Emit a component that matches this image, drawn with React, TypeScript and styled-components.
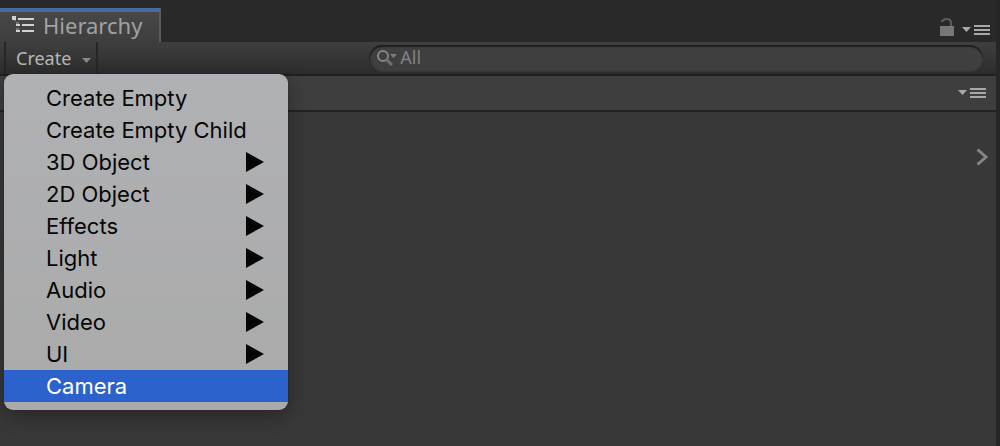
import React from "react";
import styled, { createGlobalStyle } from "styled-components";

const GlobalStyle = createGlobalStyle`
  *, *::before, *::after { box-sizing: border-box; }
  body {
    margin: 0;
    background: #262626;
    font-family: "Noto Sans", "Open Sans", sans-serif;
    color: #b4b4b4;
  }
  button { border: 0; padding: 0; background: none; color: inherit; font: inherit; }
`;

const Window = styled.main`
  display: flex;
  flex-direction: column;
  min-height: 100vh;
  padding-right: 4px;
  background: #262626;
`;

const TabBar = styled.header`
  display: flex;
  align-items: stretch;
  justify-content: space-between;
  height: 42px;
  padding-top: 8px;
  background: #292929;
`;

const Tab = styled.button`
  display: flex;
  align-items: center;
  gap: 8px;
  padding: 0 17px 4px 12px;
  border-top: 4px solid #466ca4;
  border-right: 2px solid #5c5c5c;
  background: linear-gradient(#484848, #3e3e3e);
  color: #a2a2a2;
  font-size: 22px;
  line-height: 26px;
`;

const Actions = styled.div`
  display: flex;
  align-items: flex-end;
  gap: 8px;
  padding: 0 6px 6px 0;
`;

const IconButton = styled.button`
  display: flex;
  color: #a8a8a8;
`;

const Toolbar = styled.div`
  position: relative;
  display: flex;
  align-items: center;
  height: 34px;
  padding: 0 13px 0 4px;
  background: linear-gradient(#3f3f3f, #2c2c2c);
  border-bottom: 2px solid #202020;
`;

const CreateButton = styled.button`
  display: flex;
  align-items: center;
  gap: 11px;
  height: 32px;
  padding: 0 5px 0 10px;
  border: solid #262626;
  border-width: 0 2px;
  color: #b8b8b8;
  font-size: 18px;
  line-height: 32px;
`;

const Search = styled.label`
  display: flex;
  flex: 1;
  align-items: center;
  gap: 2px;
  height: 27px;
  margin-left: 271px;
  padding-left: 8px;
  border-radius: 14px;
  background: #3f3f3f;
  box-shadow: inset 0 2px 1px #1e1e1e, inset 1px 0 2px #262626;
  color: #828282;
`;

const SearchInput = styled.input`
  flex: 1;
  min-width: 0;
  height: 27px;
  padding: 0 0 3px;
  border: 0;
  outline: 0;
  background: none;
  color: inherit;
  font: 18px/24px "Noto Sans", sans-serif;
  &::placeholder { color: #828282; opacity: 1; }
`;

const SceneRow = styled.div`
  display: flex;
  align-items: center;
  justify-content: flex-end;
  height: 36px;
  padding-right: 10px;
  background: #3e3e3e;
  border-bottom: 2px solid #232323;
`;

const Content = styled.section`
  display: flex;
  flex: 1;
  align-items: flex-start;
  justify-content: flex-end;
  padding: 36px 8px 0 0;
  background: #383838;
`;

const Menu = styled.ul`
  position: absolute;
  top: 32px;
  left: 4px;
  z-index: 1;
  width: 284px;
  margin: 0;
  padding: 8px 0;
  overflow: hidden;
  list-style: none;
  border-radius: 9px;
  background: linear-gradient(#b0b1b4, #aaaaaa);
  box-shadow: 0 6px 20px rgba(0, 0, 0, 0.3), 0 0 1px #1c1c1c;
`;

const MenuItem = styled.button<{ $active?: boolean }>`
  display: flex;
  align-items: center;
  justify-content: space-between;
  width: 100%;
  height: 32px;
  padding: 0 24px 0 42px;
  background: ${(p) => (p.$active ? "#2c62cb" : "transparent")};
  color: ${(p) => (p.$active ? "#ffffff" : "#060606")};
  font: 22px/32px Inter, "Liberation Sans", sans-serif;
  text-align: left;
`;

const items = [
  { label: "Create Empty" },
  { label: "Create Empty Child" },
  { label: "3D Object", submenu: true },
  { label: "2D Object", submenu: true },
  { label: "Effects", submenu: true },
  { label: "Light", submenu: true },
  { label: "Audio", submenu: true },
  { label: "Video", submenu: true },
  { label: "UI", submenu: true },
  { label: "Camera", active: true },
];

const HierarchyIcon = () => (
  <svg width="23" height="18" viewBox="0 0 23 18" fill="#d2d2d2" aria-hidden="true">
    <path d="M0 0h4v4H0zM6 2h16v2H6zM4 8h4v2H4zM10 8h12v2H10zM4 14h4v2H4zM10 14h12v2H10z" />
    <path d="M4 6h3v2H4zM4 12h3v2H4zM2 4h2v1H2z" fill="#777" />
  </svg>
);

const LockIcon = () => (
  <svg width="14" height="18" viewBox="0 0 14 18" aria-hidden="true">
    <path d="M0 8h14v10H0z" fill="#777" />
    <path d="M2 4V3Q4 1 7 1q4 0 4 4v3" fill="none" stroke="#5c5c5c" strokeWidth="2" />
  </svg>
);

const OptionsIcon = () => (
  <svg width="28" height="12" viewBox="0 0 28 12" fill="currentColor" aria-hidden="true">
    <path d="M0 3h9L4.500 8zM12 1h16v2H12zM12 5h16v2H12zM12 9h16v2H12z" />
  </svg>
);

const CaretIcon = () => (
  <svg width="9" height="9" viewBox="0 0 9 9" fill="#888" aria-hidden="true">
    <path d="M0 4h9L4.500 9z" />
  </svg>
);

const SearchIcon = () => (
  <svg width="21" height="18" viewBox="0 0 21 18" aria-hidden="true">
    <circle cx="6" cy="7" r="5" fill="none" stroke="#858585" strokeWidth="2" />
    <path d="M10 11l5 5" stroke="#707070" strokeWidth="3" />
    <path d="M13 5h7l-3.500 4z" fill="#7c7c7c" />
  </svg>
);

const ChevronIcon = () => (
  <svg width="12" height="18" viewBox="0 0 12 18" aria-hidden="true">
    <path d="M1.500 1.500L10 9l-8.500 7.500" fill="none" stroke="#858585" strokeWidth="3" />
  </svg>
);

const SubmenuIcon = () => (
  <svg width="18" height="20" viewBox="0 0 18 20" aria-hidden="true">
    <path d="M0 0l18 10L0 20z" fill="#050505" />
  </svg>
);

export default function App() {
  return (
    <Window>
      <GlobalStyle />
      <TabBar>
        <Tab>
          <HierarchyIcon />
          Hierarchy
        </Tab>
        <Actions>
          <IconButton aria-label="Lock"><LockIcon /></IconButton>
          <IconButton aria-label="Tab options"><OptionsIcon /></IconButton>
        </Actions>
      </TabBar>
      <Toolbar>
        <CreateButton aria-haspopup="menu" aria-expanded="true">
          Create
          <CaretIcon />
        </CreateButton>
        <Search>
          <SearchIcon />
          <SearchInput type="text" placeholder="All" aria-label="Search hierarchy" />
        </Search>
        <Menu role="menu">
          {items.map(({ label, submenu, active }) => (
            <li key={label} role="none">
              <MenuItem role="menuitem" $active={active}>
                {label}
                {submenu && <SubmenuIcon />}
              </MenuItem>
            </li>
          ))}
        </Menu>
      </Toolbar>
      <SceneRow>
        <IconButton aria-label="Scene options"><OptionsIcon /></IconButton>
      </SceneRow>
      <Content>
        <IconButton aria-label="Open"><ChevronIcon /></IconButton>
      </Content>
    </Window>
  );
}
